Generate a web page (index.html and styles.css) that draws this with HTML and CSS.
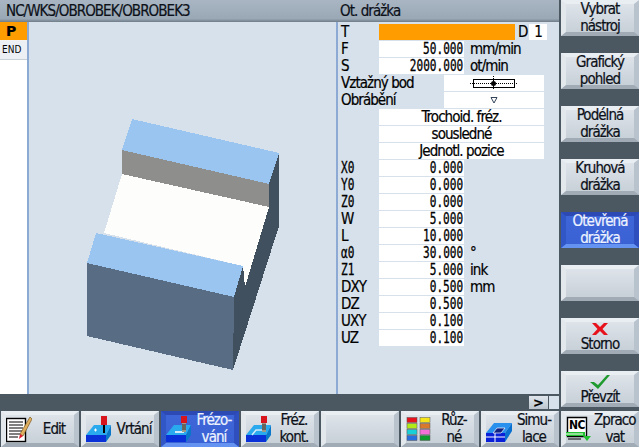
FILE: index.html
```html
<!DOCTYPE html>
<html lang="cs">
<head>
<meta charset="utf-8">
<title>Ot. drážka</title>
<link rel="stylesheet" href="styles.css">
</head>
<body>
<div class="screen">
  <div class="upper">
    <div class="main">
      <div class="titles">
        <div class="title title-left">NC/WKS/OBROBEK/OBROBEK3</div>
        <div class="title title-right">Ot. drážka</div>
      </div>
      <div class="work">
        <div class="prog">
          <div class="prog-p">P</div>
          <div class="prog-end">END</div>
        </div>
        <div class="canvas">
          <svg class="part" width="307" height="372" viewBox="29 22 307 372" shape-rendering="crispEdges">
            <polygon fill="#9ac5f0" points="132,119 279,153 269,184 122,150"/>
            <polygon fill="#8e8e8c" points="122,150 269,184 269,207 122,174"/>
            <polygon fill="#fdfdfb" points="122,174 269,207 245,287 243,266 104,233"/>
            <polygon fill="#40505f" points="279,153 279,226 233,370 234,297 243,266 245,287 269,207 269,184"/>
            <polygon fill="#9ac5f0" points="96,233 243,266 234,297 87,263"/>
            <polygon fill="#586d84" points="87,263 234,297 233,370 87,336"/>
          </svg>
        </div>
        <div class="form">
          <div class="row"><span class="lbl">T</span><span class="tool"></span><span class="d">D</span><span class="dval">1</span></div>
          <div class="row"><span class="lbl">F</span><span class="num"><span class="mono">50.000</span></span><span class="unit">mm/min</span></div>
          <div class="row"><span class="lbl">S</span><span class="num"><span class="mono">2000.000</span></span><span class="unit">ot/min</span></div>
          <div class="row"><span class="lbl lbl-wide">Vztažný bod</span><span class="pick">
            <svg width="48" height="14" viewBox="0 0 48 14"><rect x="3.500" y="3.500" width="41" height="8" fill="#fff" stroke="#000"/><path d="M0 7.500H48" stroke="#000" stroke-dasharray="1 1"/><path d="M23.500 0V15" stroke="#000" stroke-dasharray="1 1"/><circle cx="23.500" cy="7.500" r="2.500" fill="#000"/></svg></span></div>
          <div class="row"><span class="lbl lbl-wide">Obrábění</span><span class="pick">
            <svg width="8" height="8" viewBox="0 0 8 8"><path d="M1 1.500H7L4 7Z" fill="#fff" stroke="#33435a"/></svg></span></div>
          <div class="row"><span class="lbl"></span><span class="full">Trochoid. fréz.</span></div>
          <div class="row"><span class="lbl"></span><span class="full">sousledné</span></div>
          <div class="row"><span class="lbl"></span><span class="full">Jednotl. pozice</span></div>
          <div class="row"><span class="lbl"><span class="mono-l">X0</span></span><span class="num"><span class="mono">0.000</span></span></div>
          <div class="row"><span class="lbl"><span class="mono-l">Y0</span></span><span class="num"><span class="mono">0.000</span></span></div>
          <div class="row"><span class="lbl"><span class="mono-l">Z0</span></span><span class="num"><span class="mono">0.000</span></span></div>
          <div class="row"><span class="lbl">W</span><span class="num"><span class="mono">5.000</span></span></div>
          <div class="row"><span class="lbl">L</span><span class="num"><span class="mono">10.000</span></span></div>
          <div class="row"><span class="lbl"><span class="mono-l">α0</span></span><span class="num"><span class="mono">30.000</span></span><span class="unit">°</span></div>
          <div class="row"><span class="lbl"><span class="mono-l">Z1</span></span><span class="num"><span class="mono">5.000</span></span><span class="unit">ink</span></div>
          <div class="row"><span class="lbl">DXY</span><span class="num"><span class="mono">0.500</span></span><span class="unit">mm</span></div>
          <div class="row"><span class="lbl">DZ</span><span class="num"><span class="mono">0.500</span></span></div>
          <div class="row"><span class="lbl">UXY</span><span class="num"><span class="mono">0.100</span></span></div>
          <div class="row"><span class="lbl">UZ</span><span class="num"><span class="mono">0.100</span></span></div>
        </div>
      </div>
      <div class="status"><span class="more">&gt;</span><span class="status-box"></span></div>
    </div>
    <div class="vkeys">
      <div class="key">Vybrat<br>nástroj</div>
      <div class="key">Grafický<br>pohled</div>
      <div class="key">Podélná<br>drážka</div>
      <div class="key">Kruhová<br>drážka</div>
      <div class="key key-on">Otevřená<br>drážka</div>
      <div class="key"></div>
      <div class="key key-icon">
        <svg width="20" height="14" viewBox="0 0 20 14"><path d="M2 1H6L10 5L14 1H18L12.500 7L18 13H14L10 9L6 13H2L7.500 7Z" fill="#e8121c"/></svg>
        <span>Storno</span>
      </div>
      <div class="key key-icon">
        <svg width="20" height="14" viewBox="0 0 20 14"><path d="M0 7H4L8 10L17 0H20L8 14Z" fill="#1f9a2e"/></svg>
        <span>Převzít</span>
      </div>
    </div>
  </div>
  <div class="hkeys">
    <div class="key hkey">
      <svg class="ico" width="26" height="27" viewBox="0 0 26 27"><rect x=".5" y="2.500" width="19" height="23" fill="#fff" stroke="#000" stroke-width="1.400"/><path d="M3 6H17M3 9H17M3 12H17M3 15H17M3 18H14M3 21H12" stroke="#000" stroke-width="1.200"/><path d="M24 1L14 18L17 20L26 3Z" fill="#e0b060" stroke="#7a5a20" stroke-width=".7"/><path d="M14 18L13 23L17 20Z" fill="#e0182c"/></svg>
      <span class="cap">Edit</span>
    </div>
    <div class="key hkey">
      <svg class="ico" width="26" height="27" viewBox="0 0 26 27"><path d="M0 19L8 9H25L20 19Z" fill="#29a9ee"/><path d="M0 19H20V26H0Z" fill="#0a30d8"/><path d="M20 19L25 9V19L20 26Z" fill="#0a78c8"/><rect x="15" y="0" width="6" height="9" fill="#d8141c"/><rect x="17" y="9" width="2" height="8" fill="#000"/><path d="M8 14H11M9.500 12.500V15.500" stroke="#fff"/></svg>
      <span class="cap">Vrtání</span>
    </div>
    <div class="key hkey key-on">
      <svg class="ico" width="26" height="27" viewBox="0 0 26 27"><path d="M0 19L8 9H25L20 19Z" fill="#29a9ee"/><path d="M0 19H20V26H0Z" fill="#0a30d8"/><path d="M20 19L25 9V19L20 26Z" fill="#0a78c8"/><path d="M9 15H18V17H9Z" fill="#cfe9fa"/><rect x="15" y="0" width="6" height="7" fill="#d8141c"/><rect x="16" y="7" width="4" height="9" fill="#9a9a8c"/><path d="M16 9H20M16 11H20M16 13H20" stroke="#333"/></svg>
      <span class="cap cap2">Frézo-<br>vání</span>
    </div>
    <div class="key hkey">
      <svg class="ico" width="26" height="27" viewBox="0 0 26 27"><path d="M0 19L8 9H25L20 19Z" fill="#29a9ee"/><path d="M0 19H20V26H0Z" fill="#0a30d8"/><path d="M20 19L25 9V19L20 26Z" fill="#0a78c8"/><path d="M6 19L10 14H18" stroke="#cfe9fa" stroke-width="1.500" fill="none"/><rect x="15" y="0" width="6" height="7" fill="#d8141c"/><rect x="16" y="7" width="4" height="9" fill="#9a9a8c"/><path d="M16 9H20M16 11H20M16 13H20" stroke="#333"/></svg>
      <span class="cap cap2">Fréz.<br>kont.</span>
    </div>
    <div class="key hkey"></div>
    <div class="key hkey">
      <svg class="ico" width="26" height="24" viewBox="0 0 26 24"><rect x="1" y=".5" width="10" height="5" fill="#e8121c" stroke="#555" stroke-width=".5"/><rect x="14" y=".5" width="10" height="5" fill="#f6e418" stroke="#555" stroke-width=".5"/><rect x="1" y="6.500" width="10" height="5" fill="#b0e818" stroke="#555" stroke-width=".5"/><rect x="14" y="6.500" width="10" height="5" fill="#d8782c" stroke="#555" stroke-width=".5"/><rect x="1" y="12.500" width="10" height="5" fill="#18d0d8" stroke="#555" stroke-width=".5"/><rect x="14" y="12.500" width="10" height="5" fill="#f470d8" stroke="#555" stroke-width=".5"/><rect x="1" y="18.500" width="10" height="5" fill="#2870e0" stroke="#555" stroke-width=".5"/><rect x="14" y="18.500" width="10" height="5" fill="#0f9a30" stroke="#555" stroke-width=".5"/></svg>
      <span class="cap cap2">Růz-<br>né</span>
    </div>
    <div class="key hkey">
      <svg class="ico ico-low" width="26" height="20" viewBox="0 0 26 20"><path d="M0 11L8 1H26L19 11Z" fill="#2a90ee"/><path d="M0 11H19V20H0Z" fill="#0a20d8"/><path d="M19 11L26 1V9L19 20Z" fill="#0a70d0"/><path d="M7 11L11 6H19L15 11Z" fill="#102080" stroke="#fff" stroke-width=".7"/><path d="M0 15H19M9 11V20" stroke="#fff"/></svg>
      <span class="cap cap2">Simu-<br>lace</span>
    </div>
    <div class="key hkey">
      <svg class="ico" width="26" height="27" viewBox="0 0 26 27"><path d="M1.500 1.500H20.500V20.500H1.500Z" fill="#fff" stroke="#000" stroke-width="1.400"/><text class="nc" x="3" y="13">NC</text><path d="M0 16H19V20H0Z" fill="#20c030"/><path d="M0 18H17" stroke="#fff"/><path d="M17 20H25L21 25Z" fill="#20c030"/><path d="M2 23H15" stroke="#000"/></svg>
      <span class="cap cap2">Zpraco<br>vat</span>
    </div>
  </div>
</div>
</body>
</html>
```

FILE: styles.css
```css
* { box-sizing: border-box; }
html, body { margin: 0; padding: 0; }
body { background: #4b5761; font-family: "DejaVu Sans Condensed", sans-serif; font-size: 15px; letter-spacing: -.95px; -webkit-text-stroke: .2px; color: #000; overflow: hidden; }
.screen { width: 639px; height: 447px; display: flex; flex-direction: column; }
.upper { display: flex; height: 411px; }
.main { width: 559px; display: flex; flex-direction: column; }
.titles { height: 22px; display: flex; background: linear-gradient(#a9b5c2 0, #9aa8b6 85%, #6f7c88 100%); color: #0c1018; line-height: 23px; }
.title { white-space: nowrap; }
.title-left { width: 340px; padding-left: 6px; }
.title-right { flex: 1; }
.work { height: 372px; display: flex; background: #d7e1eb; }
.prog { width: 27px; background: #fff; }
.prog-p { height: 19px; background: #ff9c00; border-bottom: 1px solid #f2f2f2; padding-left: 6px; font: bold 14px/18px "DejaVu Sans", sans-serif; letter-spacing: 0; }
.prog-end { height: 19px; background: #ecf0f5; border-bottom: 1px solid #c8d0d8; padding-left: 2px; font: 10px/18px "DejaVu Sans Condensed", sans-serif; letter-spacing: 0; -webkit-text-stroke: 0; }
.canvas { width: 309px; border-left: 2px solid #8caad4; }
.part { display: block; }
.form { flex: 1; border-left: 2px solid #8caad4; padding: 2px 0 0 3px; display: flex; flex-direction: column; gap: 1px; }
.row { height: 16px; display: flex; line-height: 17px; white-space: nowrap; }
.lbl { width: 38px; flex: none; }
.lbl-wide { width: 103px; }
.tool { width: 136px; background: #ff9c00; }
.d { width: 11px; margin-left: 3px; }
.dval { width: 18px; background: #fff; text-align: center; }
.num { width: 85px; background: #fff; text-align: right; padding-right: 1px; }
.unit { margin-left: 6px; }
.pick { width: 100px; background: #fff; display: flex; align-items: center; justify-content: center; }
.full { width: 165px; background: #fff; text-align: center; }
.mono, .mono-l { display: inline-block; font: 15px/17px "DejaVu Sans Mono", monospace; letter-spacing: 0; -webkit-text-stroke: .3px; transform: scaleX(.74); }
.mono { transform-origin: right center; }
.mono-l { transform-origin: left center; }
.status { height: 17px; padding: 2px 0 2px 529px; display: flex; gap: 1px; }
.more { width: 19px; background: linear-gradient(#e0e6ec, #bcc5ce); font: bold 13px/13px "DejaVu Sans", sans-serif; letter-spacing: 0; text-align: center; }
.status-box { width: 10px; background: #d7e1eb; }
.vkeys { width: 80px; padding-left: 2px; display: flex; flex-direction: column; gap: 17px; }
.key { height: 36px; display: flex; flex-direction: column; align-items: center; justify-content: center; text-align: center; line-height: 17px; color: #0c1018; border-style: solid; border-width: 4px 5px; border-color: #e9eef3 #b9c3cd #a0abb6 #e3e8ed; background: linear-gradient(#dde3e9, #c8d0d8); }
.key-on { background: linear-gradient(#3f66d8, #3a62d4); border-color: #2c49b4 #2e4fbd #6593f2 #3156c6; color: #eef3ff; }
.key-icon { justify-content: flex-end; }
.key-icon span { margin-bottom: -3px; }
.key-icon svg { margin-top: -4px; }
.hkeys { height: 36px; display: flex; gap: 2px; padding-left: 1px; }
.hkey { width: 78px; flex-direction: row; justify-content: flex-start; align-items: center; padding-left: 0; border-left-width: 5px; }
.ico { flex: none; margin-top: 0; }
.ico-low { margin-top: 5px; }
.cap { flex: 1; text-align: center; padding-left: 2px; }
.nc { font: bold 12px "DejaVu Sans Condensed", sans-serif; letter-spacing: -.5px; -webkit-text-stroke: 0; }
```
